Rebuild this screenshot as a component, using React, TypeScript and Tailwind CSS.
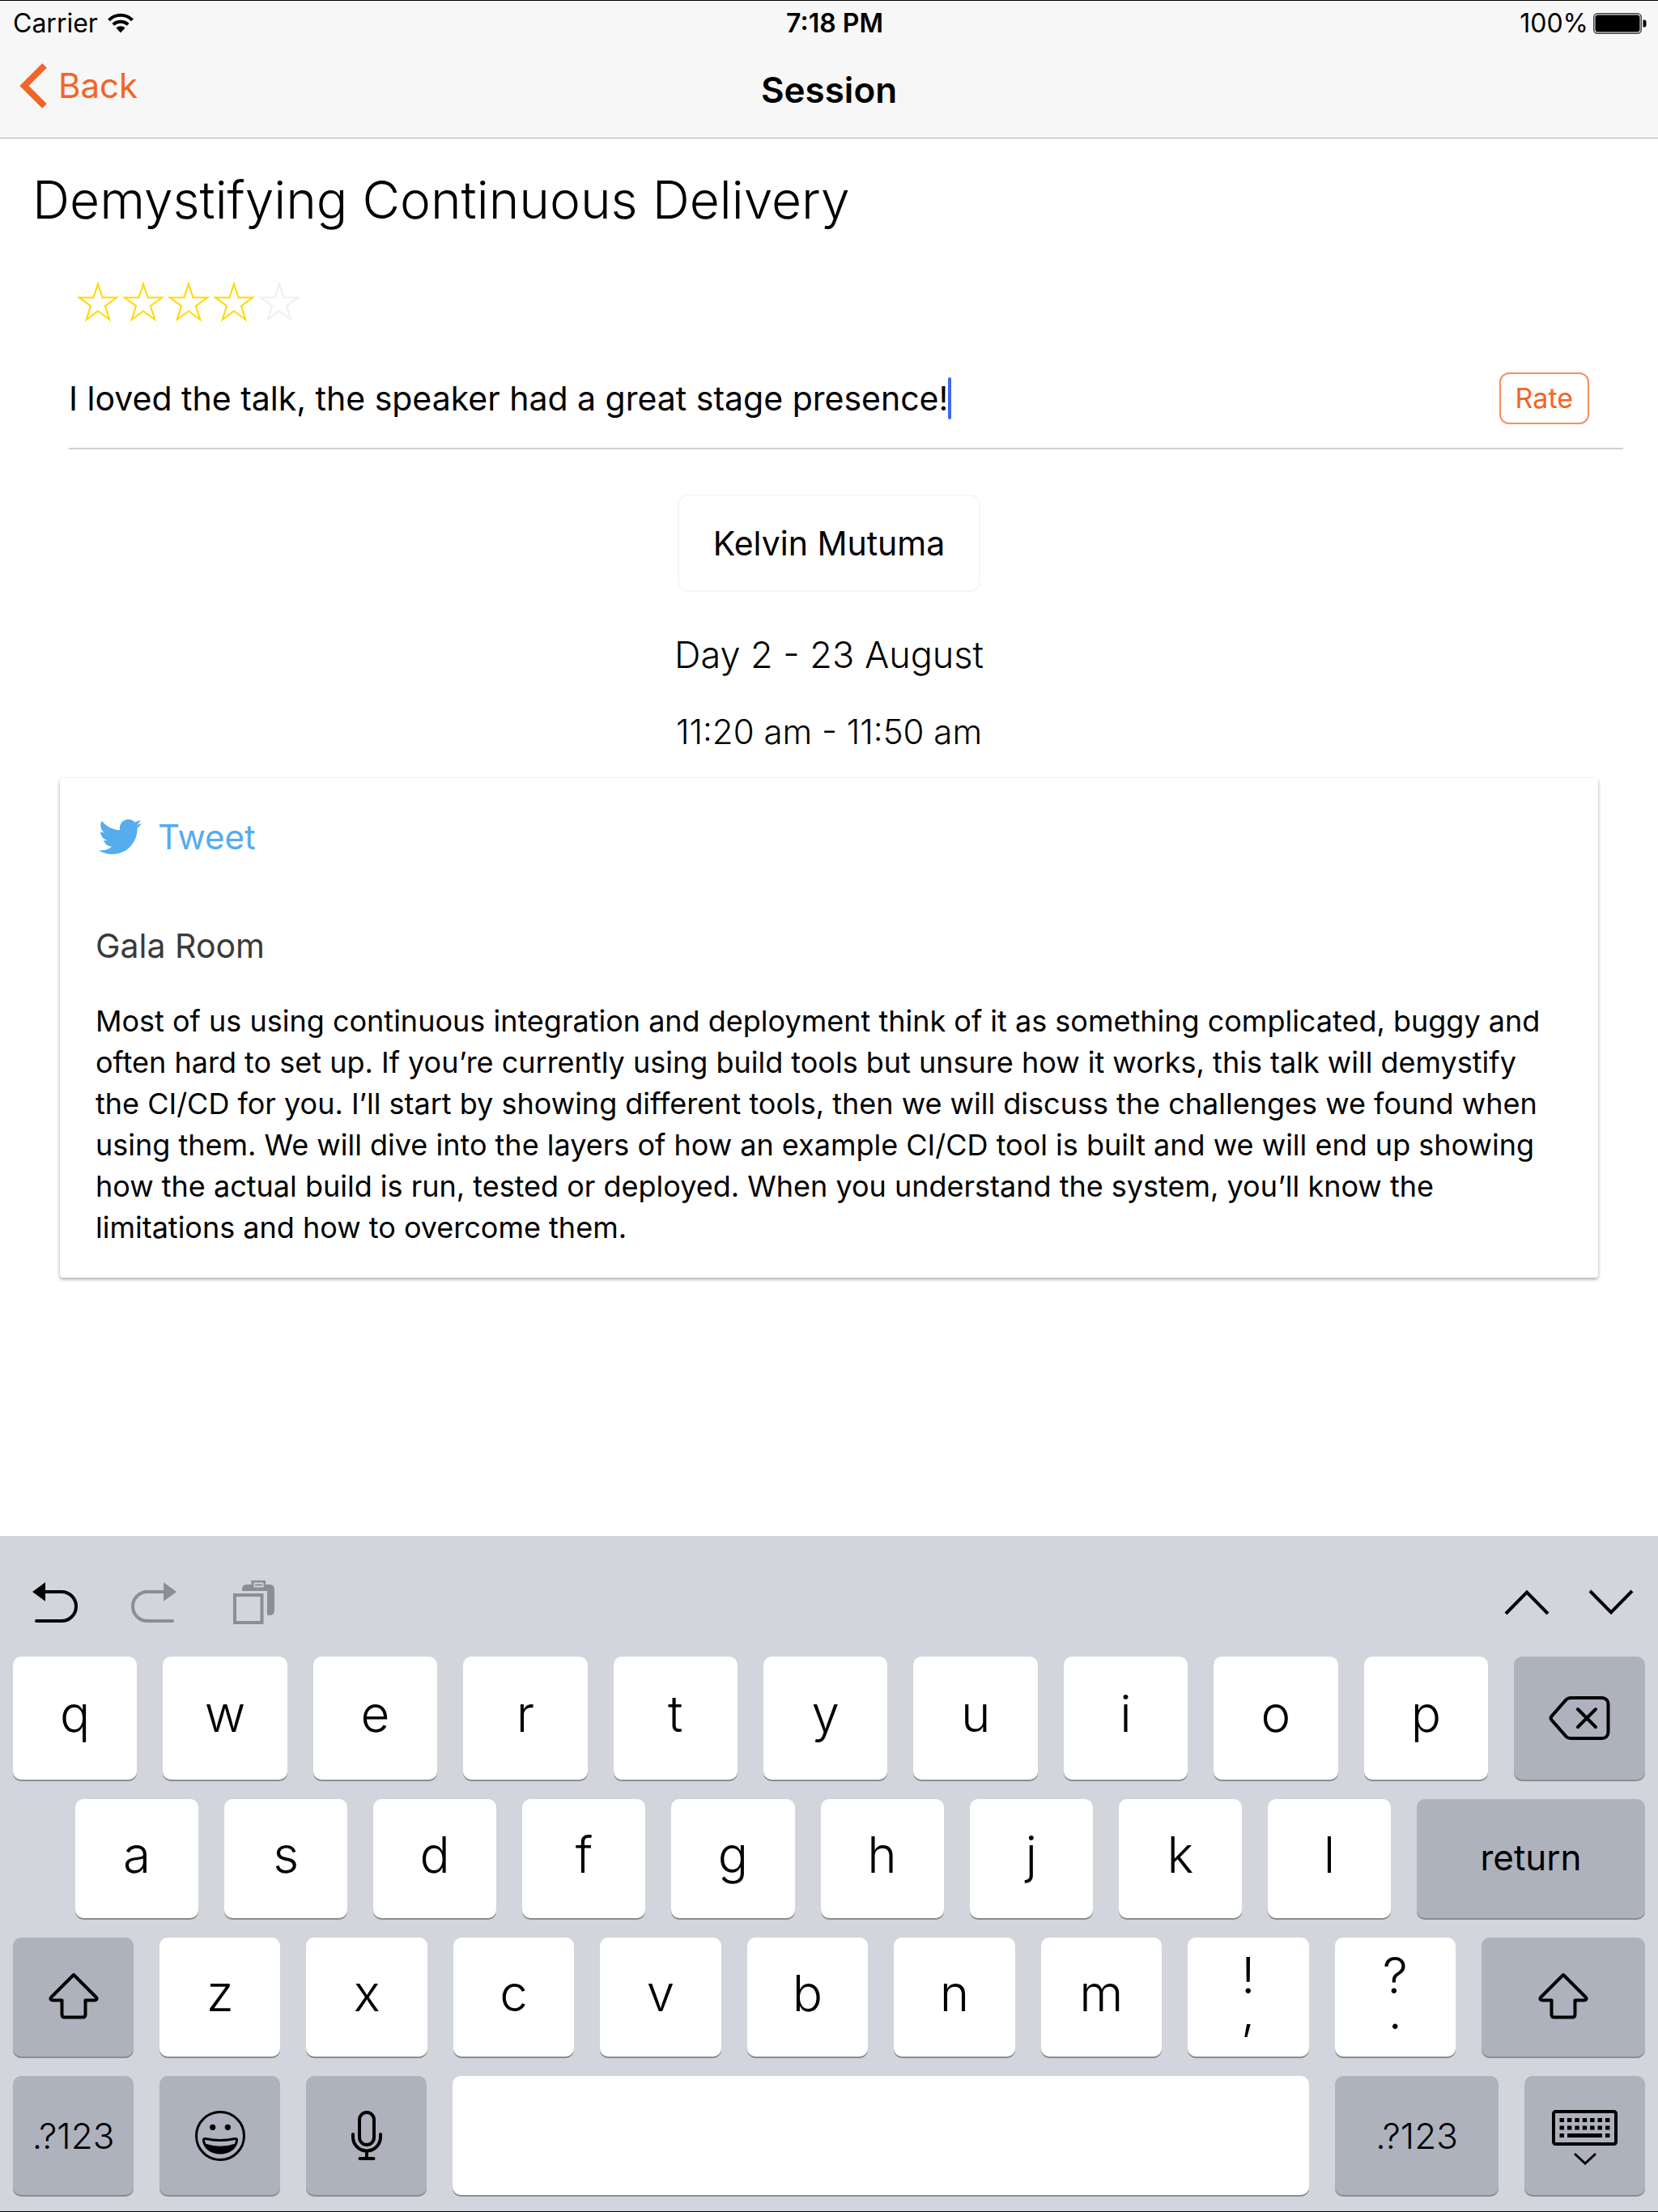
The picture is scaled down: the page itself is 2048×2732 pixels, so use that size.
import type { ReactNode } from "react";
import { FaTwitter } from "react-icons/fa";

function WifiIcon() {
  return (
    <svg width="32" height="25" viewBox="0 0 32 25" fill="none" stroke="#000" strokeWidth="4">
      <path d="M1.5 8.8C9.5 0.8 22.5 0.8 30.5 8.8" />
      <path d="M6.8 14.4C12 9.6 20 9.6 25.2 14.4" />
      <path d="M10.5 18.6C13.5 15.6 18.5 15.6 21.5 18.6L16 24.5Z" fill="#000" stroke="none" />
    </svg>
  );
}

function BatteryIcon() {
  return (
    <svg width="66" height="26" viewBox="0 0 66 26" fill="none">
      <rect x="0.75" y="0.75" width="58.5" height="24.5" rx="4.5" stroke="#444" strokeWidth="1.5" />
      <rect x="2.5" y="2.5" width="55" height="21" rx="3" fill="#000" />
      <path d="M61.5 8.5h1.5a2.5 2.5 0 0 1 2.5 2.5v4a2.5 2.5 0 0 1-2.5 2.5h-1.5Z" fill="#000" />
    </svg>
  );
}

function BackIcon() {
  return (
    <svg width="34" height="58" viewBox="0 0 34 58" fill="none" stroke="currentColor" strokeWidth="8">
      <path d="M31 4L6 29L31 54" />
    </svg>
  );
}

function StarIcon() {
  return (
    <svg width="56" height="56" viewBox="0 0 56 56" fill="none" stroke="currentColor" strokeWidth="2" strokeMiterlimit="10">
      <path d="M28 3.6L33.5 20.5H51.2L36.9 30.9L42.3 47.7L28 37.3L13.7 47.7L19.1 30.9L4.8 20.5H22.5Z" />
    </svg>
  );
}

function UndoIcon() {
  return (
    <svg width="56" height="52" viewBox="0 0 56 52" fill="none">
      <path d="M0 13L16 1.3V24.7Z" fill="#000" />
      <path d="M14 13H36A18 18 0 0 1 36 49H5" stroke="#000" strokeWidth="4" strokeLinecap="round" />
    </svg>
  );
}

function RedoIcon() {
  return (
    <svg width="56" height="52" viewBox="0 0 56 52" fill="none">
      <path d="M56 13L40 1.3V24.7Z" fill="#8b8e92" />
      <path d="M42 13H20A18 18 0 0 0 20 49H51" stroke="#8b8e92" strokeWidth="4" strokeLinecap="round" />
    </svg>
  );
}

function PasteIcon() {
  return (
    <svg width="52" height="54" viewBox="0 0 52 54" fill="#8b8e92">
      <path d="M11 13V11Q11 5 17 5H45Q51 5 51 11V37Q51 43 45 43H42V13Z" />
      <rect x="22.5" width="17.5" height="10" />
      <rect x="25.5" y="2.5" width="12" height="6" fill="#d2d5dc" />
      <rect x="27" y="4.5" width="9" height="2" />
      <rect x="2" y="18" width="33.5" height="34" fill="none" stroke="#8b8e92" strokeWidth="4" />
    </svg>
  );
}

function ChevronIcon({ d }: { d: string }) {
  return (
    <svg width="56" height="34" viewBox="0 0 56 34" fill="none" stroke="#000" strokeWidth="4">
      <path d={d} />
    </svg>
  );
}

function BackspaceIcon() {
  return (
    <svg width="76" height="56" viewBox="0 0 76 56" fill="none" stroke="#000" strokeWidth="4" strokeLinecap="round">
      <path d="M27 3H66a7.5 7.5 0 0 1 7.5 7.5V45.5a7.5 7.5 0 0 1-7.5 7.5H27c-2 0-4-.8-5.4-2.2L3.6 30.4c-1.4-1.6-1.4-3.2 0-4.8L21.6 5.2C23 3.8 25 3 27 3Z" />
      <path d="M36 17L58 39M58 17L36 39" />
    </svg>
  );
}

function ShiftIcon() {
  return (
    <svg width="62" height="58" viewBox="0 0 62 58" fill="none" stroke="#000" strokeWidth="4" strokeLinejoin="round">
      <path d="M31 3L58.5 30.5C60.5 32.5 59.5 34.5 57 34.5H45.5V52Q45.5 55.5 42 55.5H20Q16.5 55.5 16.5 52V34.5H5C2.5 34.5 1.5 32.5 3.5 30.5Z" />
    </svg>
  );
}

function EmojiIcon() {
  return (
    <svg width="62" height="62" viewBox="0 0 62 62" fill="none" stroke="#000" strokeWidth="3">
      <circle cx="31" cy="31" r="29.5" />
      <circle cx="21.7" cy="20.3" r="3.6" fill="#000" stroke="none" />
      <circle cx="40.3" cy="20.3" r="3.6" fill="#000" stroke="none" />
      <path d="M13 34.5Q31 38.5 49 34.5Q52 34 51.5 37C50 46 42 52 31 52S12 46 10.5 37Q10 34 13 34.5Z" />
      <path d="M12 40.5Q31 47 50 40.5C47 48 40 52.5 31 52.5S15 48 12 40.5Z" fill="#000" stroke="none" />
    </svg>
  );
}

function MicIcon() {
  return (
    <svg width="38" height="62" viewBox="0 0 38 62" fill="none" stroke="#000" strokeWidth="4" strokeLinecap="round">
      <rect x="10" y="2" width="18" height="40" rx="9" />
      <path d="M2 29V32.5a17 17 0 0 0 34 0V29M19 50V59M10.5 59H27.5" />
    </svg>
  );
}

function HideKeyboardIcon() {
  const columns = [0, 1, 2, 3, 4, 5, 6];
  return (
    <svg width="82" height="68" viewBox="0 0 82 68">
      <rect x="2" y="2" width="77" height="40" rx="2.5" fill="none" stroke="#000" strokeWidth="4" />
      {columns.map((c) => (
        <g key={c}>
          <rect x={9.5 + c * 9.4} y="10" width="5.5" height="5" />
          <rect x={9.5 + c * 9.4} y="19.5" width="5.5" height="5" />
        </g>
      ))}
      <rect x="9.5" y="29" width="5.5" height="5" />
      <rect x="19" y="29" width="43" height="5" />
      <rect x="65.9" y="29" width="5.5" height="5" />
      <path d="M28 54L41 66L54 54" fill="none" stroke="#000" strokeWidth="3" />
    </svg>
  );
}

const keyShape = "flex h-full items-center justify-center rounded-[10px] shadow-[0_2px_0_#8a8c90]";

function LetterKey({ children }: { children: string }) {
  return (
    <button className={`${keyShape} min-w-0 flex-1 bg-white pb-2.5 text-[62px] leading-none font-[350]`}>
      {children}
    </button>
  );
}

function PairKey({ pair }: { pair: string }) {
  return (
    <button className={`${keyShape} min-w-0 flex-1 bg-white pb-2.5 text-[62px] leading-[44px] font-[350] whitespace-pre-line`}>
      {pair}
    </button>
  );
}

function DarkKey({ width, label, children }: { width: string; label: string; children: ReactNode }) {
  return (
    <button aria-label={label} className={`${keyShape} shrink-0 bg-[#aeb2bd] text-[44px] leading-none ${width}`}>
      {children}
    </button>
  );
}

function KeyRow({ children, className }: { children: ReactNode; className: string }) {
  return <div className={`flex gap-8 pr-4 ${className}`}>{children}</div>;
}

function Keyboard() {
  return (
    <section aria-label="Keyboard" className="border-b border-black bg-[#d2d5dc] pb-5">
      <div className="flex h-[149px] items-center pt-3.5 pr-[30px] pl-10">
        <button aria-label="Undo"><UndoIcon /></button>
        <button aria-label="Redo" className="ml-[66px]"><RedoIcon /></button>
        <button aria-label="Paste" className="ml-[70px]"><PasteIcon /></button>
        <button aria-label="Previous field" className="ml-auto"><ChevronIcon d="M2 31L28 4.5L54 31" /></button>
        <button aria-label="Next field" className="ml-12"><ChevronIcon d="M2 3L28 29.5L54 3" /></button>
      </div>
      <div className="flex flex-col gap-6">
        <KeyRow className="h-[152px] pl-4">
          {"qwertyuiop".split("").map((k) => <LetterKey key={k}>{k}</LetterKey>)}
          <DarkKey width="w-[162px]" label="Delete"><BackspaceIcon /></DarkKey>
        </KeyRow>
        <KeyRow className="h-[147px] pl-[93px]">
          {"asdfghjkl".split("").map((k) => <LetterKey key={k}>{k}</LetterKey>)}
          <DarkKey width="w-[282px] pb-1" label="return">return</DarkKey>
        </KeyRow>
        <KeyRow className="h-[147px] pl-4">
          <DarkKey width="w-[149px] pb-1" label="Shift"><ShiftIcon /></DarkKey>
          {"zxcvbnm".split("").map((k) => <LetterKey key={k}>{k}</LetterKey>)}
          <PairKey pair={"!\n,"} />
          <PairKey pair={"?\n."} />
          <DarkKey width="w-[202px] pb-1" label="Shift"><ShiftIcon /></DarkKey>
        </KeyRow>
        <KeyRow className="h-[147px] pl-4">
          <DarkKey width="w-[149px]" label="Numbers"><span className="font-[350]">.?123</span></DarkKey>
          <DarkKey width="w-[149px]" label="Emoji"><EmojiIcon /></DarkKey>
          <DarkKey width="w-[149px]" label="Dictate"><MicIcon /></DarkKey>
          <button aria-label="Space" className={`${keyShape} min-w-0 flex-1 bg-white`} />
          <DarkKey width="w-[202px]" label="Numbers"><span className="font-[350]">.?123</span></DarkKey>
          <DarkKey width="w-[149px] pt-1" label="Hide keyboard"><HideKeyboardIcon /></DarkKey>
        </KeyRow>
      </div>
    </section>
  );
}

function Header() {
  return (
    <header className="border-t border-b border-t-black border-b-[#b2b2b2] bg-[#f7f7f7]">
      <div className="grid h-[55px] grid-cols-[1fr_auto_1fr] items-center pr-[14px] pl-4 text-[32px] leading-none">
        <div className="flex items-center gap-3">
          <span>Carrier</span>
          <WifiIcon />
        </div>
        <span className="pl-3 font-semibold">7:18 PM</span>
        <div className="flex items-center justify-end gap-1.5">
          <span>100%</span>
          <BatteryIcon />
        </div>
      </div>
      <nav className="grid h-[114px] grid-cols-[1fr_auto_1fr] items-center pb-1 pl-6">
        <button className="flex items-center gap-[14px] justify-self-start pb-2.5 text-[42px] leading-none text-[#f26526]">
          <BackIcon />
          Back
        </button>
        <h1 className="pr-6 text-[44px] leading-none font-semibold">Session</h1>
      </nav>
    </header>
  );
}

export default function App() {
  return (
    <div className="flex min-h-screen flex-col bg-white font-['Inter',sans-serif] text-black">
      <Header />
      <main className="flex-1">
        <h2 className="pt-7 pl-10 text-[64px] leading-[96px] font-[350]">Demystifying Continuous Delivery</h2>
        <div role="group" aria-label="Rating" className="mt-[52px] ml-[93px] flex">
          {[1, 2, 3, 4, 5].map((n) => (
            <button key={n} aria-label={`${n} stars`} className={n <= 4 ? "text-[#ffd900]" : "text-[#efefef]"}>
              <StarIcon />
            </button>
          ))}
        </div>
        <form className="mt-7 mr-[43px] ml-[85px] flex h-[124px] items-center border-b-2 border-[#d0d0d0] pr-[42px]">
          <input
            aria-label="Comment"
            defaultValue="I loved the talk, the speaker had a great stage presence!"
            className="field-sizing-content bg-transparent text-[41px] leading-[52px] outline-none"
          />
          <span className="h-[52px] w-1 rounded-full bg-[#4169ec]" />
          <button type="button" className="ml-auto h-[64px] rounded-[12px] border-2 border-[#f68f62] px-[18px] text-[34px] leading-none text-[#f26526]">
            Rate
          </button>
        </form>
        <div className="flex flex-col items-center">
          <button className="mt-14 h-[120px] rounded-[12px] border-2 border-[#f7f7f7] px-[42px] pt-0.5 text-[41px]">Kelvin Mutuma</button>
          <p className="mt-12 text-[45px] leading-[60px] font-[350]">Day 2 - 23 August</p>
          <p className="mt-[35px] text-[42px] leading-[60px] font-[350]">11:20 am - 11:50 am</p>
        </div>
        <article className="mx-[74px] mt-[27px] rounded-[4px] bg-white px-[44px] pt-[41px] pb-9 shadow-[0_2px_4px_rgba(0,0,0,0.35)]">
          <a href="#tweet" className="ml-1 inline-flex h-[62px] items-center gap-5 align-top text-[42px] text-[#55acee]">
            <FaTwitter size={53} />
            Tweet
          </a>
          <h3 className="mt-[74px] text-[41px] leading-[60px] text-[#3a3a3a]">Gala Room</h3>
          <p className="mt-[38px] text-[36px] leading-[51px]">
            Most of us using continuous integration and deployment think of it as something complicated, buggy and often
            hard to set up. If you’re currently using build tools but unsure how it works, this talk will demystify the
            CI/CD for you. I’ll start by showing different tools, then we will discuss the challenges we found when using
            them. We will dive into the layers of how an example CI/CD tool is built and we will end up showing how the
            actual build is run, tested or deployed. When you understand the system, you’ll know the limitations and how
            to overcome them.
          </p>
        </article>
      </main>
      <Keyboard />
    </div>
  );
}
